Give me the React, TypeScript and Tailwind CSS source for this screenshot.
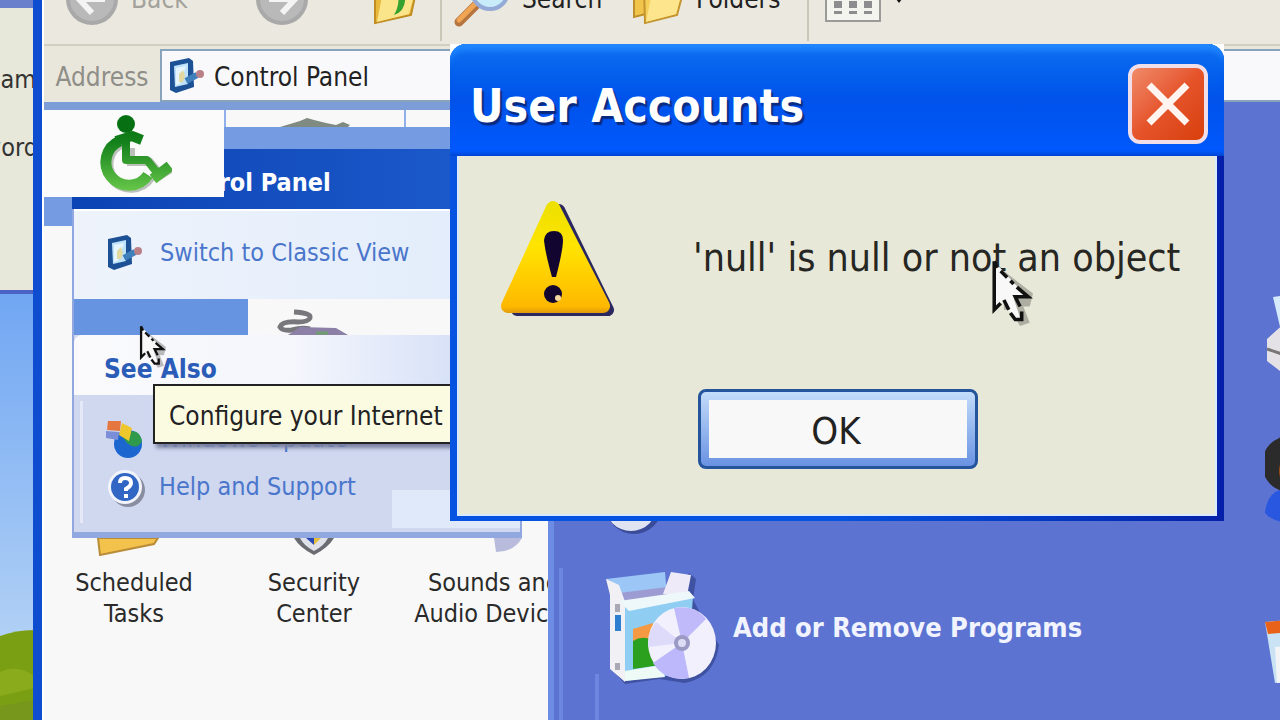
import { ReactNode } from 'react';

const PanelIcon = ({ className }: { className?: string }) => (
    <svg viewBox="0 0 40 40" className={className} aria-hidden="true">
        <path d="M4 6 L23 2 L27 5 L28 31 L10 37 L4 34 Z" fill="#1d5196" />
        <path d="M8 10 L22 7 L22 28 L9 31 Z" fill="#bfe2fb" />
        <path d="M10 12 L20 10 L14 28 L10 29 Z" fill="#e4f5ff" />
        <path d="M13 18 l4 -4 l2 6 l-2 6 l-4 0 Z" fill="#e2d9a0" />
        <path d="M20 25 L31 19" stroke="#3f7fbc" strokeWidth="6" />
        <circle cx="34" cy="18" r="4" fill="#b98088" />
    </svg>
);

const Cursor = ({ className }: { className?: string }) => (
    <svg viewBox="0 0 13 21" className={className} aria-hidden="true">
        <path d="M4 4 L13 11 L12 15 L10 15 L12 20 L9 21 L6 16 L4 16 Z" fill="#000" opacity="0.25" />
        <path d="M1 1 L1 16 L4 13 L7 19 L9 18.5 L7 12.5 L11 12 Z" fill="#f8f8f8" />
        <path
            d="M1 1 V16 L3 14 M1 1 L2 3 M3 4 L5 6 M6 7 L7 8 M8 9 L11.5 12 H7.5 L9 15 M4 13 L5.5 16 M6 17 L7.5 19 H9.5 V16.5"
            fill="none"
            stroke="#111"
            strokeWidth="1.1"
        />
    </svg>
);

const RoundArrow = ({ flip }: { flip?: boolean }) => (
    <svg viewBox="0 0 54 54" className={flip ? 'size-[54px] rotate-180' : 'size-[54px]'} aria-hidden="true">
        <circle cx="27" cy="27" r="26" fill="#a9a9a9" />
        <circle cx="27" cy="27" r="22" fill="#b9b9b9" />
        <path d="M27 13 L14 27 L27 41 M14 27 H40" fill="none" stroke="#f4f4f4" strokeWidth="6" />
    </svg>
);

const FolderUp = () => (
    <svg viewBox="0 0 46 52" className="h-[52px] w-[46px]" aria-hidden="true">
        <path d="M2 8 L30 4 L44 14 L38 42 L2 50 Z" fill="#e9b93c" stroke="#c08d22" strokeWidth="2" />
        <path d="M10 18 L44 12 L36 41 L4 49 Z" fill="#fbe58b" />
        <path d="M21 42 Q34 38 32 20 L39 22 L30 8 L18 18 L25 20 Q27 32 21 42 Z" fill="#35a22f" />
    </svg>
);

const SearchIcon = () => (
    <svg viewBox="0 0 56 56" className="size-14" aria-hidden="true">
        <path d="M5 51 L22 34" stroke="#b6743f" strokeWidth="9" strokeLinecap="round" />
        <path d="M5 49 L21 33" stroke="#f0a555" strokeWidth="5" strokeLinecap="round" />
        <circle cx="36" cy="20" r="18" fill="#c9ecfb" stroke="#93abd6" strokeWidth="4" />
    </svg>
);

const FoldersIcon = () => (
    <svg viewBox="0 0 56 52" className="h-[52px] w-14" aria-hidden="true">
        <path d="M2 6 L30 2 L40 10 L34 36 L2 44 Z" fill="#f1c44c" stroke="#bf8f2a" strokeWidth="2" />
        <path d="M12 14 L40 6 L53 12 L45 42 L13 50 Z" fill="#f6cf5a" stroke="#c4942e" strokeWidth="2" />
        <path d="M20 20 L52 12 L44 41 L14 49 Z" fill="#fde58d" />
    </svg>
);

const ViewsIcon = () => (
    <svg viewBox="0 0 56 46" className="h-[46px] w-14" aria-hidden="true">
        <rect x="1" y="1" width="54" height="44" fill="#f4f4ee" stroke="#9a9a98" strokeWidth="2" />
        {[9, 24, 39].map((x) => (
            <g key={x} fill="#8d8d90">
                <rect x={x} y="7" width="8" height="9" />
                <rect x={x} y="25" width="8" height="7" />
                <rect x={x} y="35" width="8" height="3" />
            </g>
        ))}
    </svg>
);

const Wheelchair = () => (
    <svg viewBox="0 0 76 80" className="h-20 w-[76px]" aria-hidden="true">
        <defs>
            <linearGradient id="wheel" gradientUnits="userSpaceOnUse" x1="0" y1="0" x2="0" y2="80">
                <stop offset="0" stopColor="#04700f" />
                <stop offset="0.35" stopColor="#13801b" />
                <stop offset="1" stopColor="#6ccb4c" />
            </linearGradient>
        </defs>
        <g transform="translate(2 2)" fill="none" stroke="#6f7a6f" opacity="0.45">
            <path d="M24 27 A23 23 0 1 0 52 61" strokeWidth="11" />
            <path d="M33 32 V46 H52 L63 59 L73 53" strokeWidth="8" />
        </g>
        <g fill="none" stroke="url(#wheel)">
            <path d="M24 27 A23 23 0 1 0 52 61" strokeWidth="11" />
            <path d="M30 20 V46 H51 L62 60" strokeWidth="8" strokeLinejoin="round" />
            <path d="M20 27 L36 22 L46 26" strokeWidth="10" strokeLinejoin="round" />
            <path d="M57 65 L74 52" strokeWidth="11" />
        </g>
        <circle cx="30" cy="10" r="9" fill="#067012" />
    </svg>
);

const WarningIcon = () => (
    <svg viewBox="0 0 120 124" className="h-[124px] w-[120px]" aria-hidden="true">
        <defs>
            <linearGradient id="warn" gradientUnits="userSpaceOnUse" x1="0" y1="0" x2="0" y2="116">
                <stop offset="0" stopColor="#ece000" />
                <stop offset="0.4" stopColor="#ffe400" />
                <stop offset="0.75" stopColor="#ffc600" />
                <stop offset="0.92" stopColor="#fdb800" />
                <stop offset="1" stopColor="#d48c10" />
            </linearGradient>
        </defs>
        <path d="M60 10 L109 110 L18 110 Z" fill="#2b2860" stroke="#2b2860" strokeWidth="12" strokeLinejoin="round" />
        <path d="M54 8 L104 106 L9 106 Z" fill="url(#warn)" stroke="url(#warn)" strokeWidth="14" strokeLinejoin="round" />
        <path d="M45 40 Q46 31 55 31 Q64 31 64 40 Q64 50 57 77 L53 77 Q46 52 45 40 Z" fill="#120630" />
        <circle cx="54" cy="94" r="9" fill="#120630" />
        <circle cx="59" cy="98" r="3" fill="#f4d9a0" />
    </svg>
);

const SoftwareBox = () => (
    <svg viewBox="0 0 116 118" className="h-[118px] w-[116px]" aria-hidden="true">
        <path d="M8 102 L20 115 L54 110 L80 114 Q110 108 114 76 L96 46 L88 30 L91 10 L84 4 L60 24 L20 100 Z" fill="#2c3a80" opacity="0.6" />
        <path d="M1 10 L60 3 L62 26 L14 32 Z" fill="#9cc6f6" />
        <path d="M14 24 L62 18 L64 30 L16 34 Z" fill="#9d9cd2" />
        <path d="M66 3 L86 6 L82 27 L58 25 Z" fill="#eeeaf8" />
        <path d="M1 10 L14 16 L22 38 L20 113 L5 100 L5 26 Z" fill="#f1f0f4" />
        <path d="M20 38 L88 28 L82 104 L20 112 Z" fill="#8fcdf3" />
        <path d="M14 32 L84 22 L90 29 L24 42 Z" fill="#eef7fa" />
        <path d="M28 60 L48 54 L48 76 L28 78 Z" fill="#f59a42" />
        <path d="M28 72 Q40 64 56 76 L56 96 L28 100 Z" fill="#2ba01f" />
        <path d="M20 102 L56 96 L60 108 L20 112 Z" fill="#eefaf5" />
        <rect x="10" y="46" width="6" height="16" fill="#2f7fd0" />
        <path d="M10 35 h5 v8 h-5 Z M10 94 h5 v7 h-5 Z" fill="#aaa8b4" />
        <ellipse cx="77" cy="74" rx="34" ry="36" fill="#f1f0fc" />
        <path d="M77 74 L69 39 Q90 35 101 50 Z" fill="#c0bafa" />
        <path d="M77 74 L84 109 Q60 113 48 94 Z" fill="#bcb8fb" />
        <path d="M77 74 L43 78 Q43 62 51 53 Z" fill="#dedafa" />
        <circle cx="77" cy="74" r="8" fill="#9a9ac4" />
        <circle cx="77" cy="74" r="4" fill="#dcdcf4" />
    </svg>
);

const GlobeIcon = () => (
    <svg viewBox="0 0 60 104" className="h-[104px] w-[60px]" aria-hidden="true">
        <ellipse cx="29" cy="77" rx="28" ry="27" fill="#2c3a80" opacity="0.7" />
        <ellipse cx="26" cy="75" rx="26" ry="26" fill="#dfe3f2" />
    </svg>
);

const PrinterIcon = () => (
    <svg viewBox="0 0 100 90" className="h-[90px] w-[100px]" aria-hidden="true">
        <path d="M8 6 L50 0 L60 36 L16 40 Z" fill="#d5eafc" />
        <path d="M2 48 L22 30 L80 40 L80 90 L20 84 L2 70 Z" fill="#e4e2e6" />
        <path d="M2 58 L20 64 L80 66" stroke="#777" strokeWidth="3" fill="none" />
    </svg>
);

const UserIcon = () => (
    <svg viewBox="0 0 100 90" className="h-[90px] w-[100px]" aria-hidden="true">
        <ellipse cx="24" cy="27" rx="27" ry="28" fill="#2c2b2b" />
        <ellipse cx="32" cy="34" rx="18" ry="20" fill="#9b4a10" />
        <path d="M0 76 Q2 54 20 52 L60 52 L60 86 Q10 90 0 76 Z" fill="#2a57e0" />
    </svg>
);

const RegionalIcon = () => (
    <svg viewBox="0 0 100 70" className="h-[70px] w-[100px]" aria-hidden="true">
        <path d="M0 5 L60 0 L64 60 L10 66 Z" fill="#c9e3f5" />
        <path d="M0 5 L60 0 L60 12 L3 17 Z" fill="#e9621a" />
        <path d="M10 30 L60 24 L60 62 L12 66 Z" fill="#f2f4f6" />
    </svg>
);

const UpdateIcon = () => (
    <svg viewBox="0 0 40 40" className="size-10" aria-hidden="true">
        <circle cx="23" cy="25" r="14" fill="#1c66cf" />
        <path d="M16 16 Q34 6 37 22 Q32 32 22 24 Z" fill="#2f9a4c" />
        <path d="M3 2 L16 2 L15 12 L2 11 Z" fill="#e57640" />
        <path d="M1 12 L14 13 L13 21 L1 19 Z" fill="#7b8fd8" />
        <path d="M17 4 L27 9 L24 22 L14 16 Z" fill="#eec72c" />
    </svg>
);

const HelpIcon = () => (
    <svg viewBox="0 0 40 40" className="size-10" aria-hidden="true">
        <circle cx="23" cy="23" r="17" fill="#8a8da0" />
        <circle cx="20" cy="20" r="17" fill="#f1f4fb" />
        <circle cx="20" cy="20" r="14" fill="#3266c4" />
        <path d="M15 16 Q15 11 20 11 Q26 11 26 16 Q26 19 21 22 V24" fill="none" stroke="#fff" strokeWidth="4" />
        <rect x="19" y="27" width="4" height="4" fill="#fff" />
    </svg>
);

const MouseIcon = () => (
    <svg viewBox="0 0 74 26" className="h-[26px] w-[74px]" aria-hidden="true">
        <path d="M18 3 Q36 4 34 9 Q32 13 22 13 Q6 12 4 18 Q6 22 16 21 Q26 18 34 20" fill="none" stroke="#77777c" strokeWidth="5" />
        <path d="M24 18 L60 19 L72 26 L12 26 Z" fill="#8c80a6" />
        <path d="M40 24 h12" stroke="#6f9d70" strokeWidth="3" />
    </svg>
);

const CaptionItem = ({ label, children }: { label: string; children: ReactNode }) => (
    <li className="flex flex-col items-center">
        <div className="flex h-[29px] w-full justify-center">{children}</div>
        <span className="w-[168px] text-center text-[25px] leading-[31px] text-[#2a2a2a]">{label}</span>
    </li>
);

const Toolbar = () => (
    <div className="flex h-[92px] shrink-0 items-center overflow-hidden border-b-2 border-[#d3cfc0] bg-[#ebe9df] pl-[21px] text-[26px]">
        <button className="flex w-[190px] items-center gap-3 text-[#a3a29c]">
            <RoundArrow />
            Back
        </button>
        <button className="w-[118px]" aria-label="Forward">
            <RoundArrow flip />
        </button>
        <button className="w-[67px]" aria-label="Up">
            <FolderUp />
        </button>
        <div className="h-[84px] w-[2px] bg-[#c9c6b8]" />
        <button className="ml-3 flex w-[178px] items-center gap-3 text-[#222]">
            <SearchIcon />
            Search
        </button>
        <button className="flex w-[175px] items-center gap-2 text-[#222]">
            <FoldersIcon />
            Folders
        </button>
        <div className="h-[84px] w-[2px] bg-[#c9c6b8]" />
        <button className="ml-4 flex items-center gap-3" aria-label="Views">
            <ViewsIcon />
            <svg viewBox="0 0 12 12" className="size-3" aria-hidden="true">
                <path d="M0 2 H12 L6 10 Z" fill="#111" />
            </svg>
        </button>
    </div>
);

const AddressBar = () => (
    <div className="flex h-14 shrink-0 items-stretch bg-[#e9e7dc] pt-[3px]">
        <label htmlFor="address" className="flex w-[116px] items-center justify-center pt-1 text-[26px] text-[#8f8e88]">
            Address
        </label>
        <div className="flex min-w-0 flex-1 items-center gap-2 border-2 border-r-0 border-[#88a4bd] bg-[#f9f9fb] pl-1">
            <PanelIcon className="size-10 shrink-0" />
            <input
                id="address"
                defaultValue="Control Panel"
                className="min-w-0 flex-1 bg-transparent pt-1 text-[26px] text-[#222] outline-none"
            />
        </div>
    </div>
);

const SidePanel = () => (
    <aside className="relative h-[389px] w-[450px] border-x-2 border-b-[6px] border-[#90a8df] bg-[#d0d8f0]">
        <h2 className="-ml-[2px] flex h-[60px] items-center bg-linear-to-r from-[#0c43b4] to-[#1e5ccd] pt-2 pl-[88px] text-[25px] font-bold text-white">
            Control Panel
        </h2>
        <div className="flex h-[90px] items-center border-t-2 border-white bg-linear-to-r from-[#eef3fb] to-[#e1ecfb] pb-1 pl-[30px]">
            <a href="#classic" className="flex items-center gap-4 text-[25px] text-[#4a76cb]">
                <PanelIcon className="size-10" />
                Switch to Classic View
            </a>
        </div>
        <div className="flex h-9 bg-[#f8f8f9]">
            <div className="w-[174px] bg-[#6794e0]" />
            <div className="flex items-end pl-7">
                <MouseIcon />
            </div>
        </div>
        <h2 className="flex h-[60px] items-center rounded-t-lg bg-linear-to-r from-[#fafafc] via-[#f4f6fc] to-[#cbd8f5] pt-2 pl-[30px] text-[26px] font-bold text-[#2a5cb8]">
            See Also
        </h2>
        <div className="absolute right-0 bottom-1 h-[38px] w-[128px] bg-[#e0e9f9]" />
        <ul className="relative m-[6px] border-l-[3px] border-[#e5e9f7] pl-[22px] text-[25px] text-[#4a76cb]">
            <li className="pt-[18px]">
                <a href="#update" className="flex items-center gap-[14px]">
                    <UpdateIcon />
                    Windows Update
                </a>
            </li>
            <li className="pt-2 pb-4">
                <a href="#help" className="flex items-center gap-[14px]">
                    <HelpIcon />
                    Help and Support
                </a>
            </li>
        </ul>
    </aside>
);

const ControlPanelWindow = () => (
    <section className="absolute -top-[46px] right-0 bottom-0 left-[33px] flex flex-col overflow-hidden border-l-[9px] border-[#0f4dd0] bg-white pl-[2px]">
        <Toolbar />
        <AddressBar />
        <div className="flex min-h-0 flex-1">
            <div className="relative w-[504px] shrink-0 overflow-hidden bg-[#f8f8f8]">
                <div className="h-2 bg-[#7c9dd8]" />
                <div className="flex h-[17px] divide-x-2 divide-[#8fb0ea]">
                    <div className="w-[182px]" />
                    <div className="flex w-[180px] items-end justify-center">
                        <svg viewBox="0 0 70 10" className="h-[10px] w-[70px]" aria-hidden="true">
                            <path d="M0 10 L10 7 L20 4 L27 1 L34 3 L46 6 L56 8 L63 5 L70 8 L68 10 Z" fill="#7f8a80" />
                        </svg>
                    </div>
                    <div />
                </div>
                <div className="h-[22px] bg-[#759be2]" />
                <div className="flex">
                    <div className="h-[77px] w-7 bg-[#759be2]" />
                    <SidePanel />
                </div>
                <ul className="grid w-[540px] grid-cols-3">
                    <CaptionItem label="Scheduled Tasks">
                        <svg viewBox="0 0 64 18" className="mr-3 h-[18px] w-16" aria-hidden="true">
                            <path d="M2 0 H62 L58 6 L4 17 Z" fill="#f2c24d" stroke="#b98c37" strokeWidth="2" />
                        </svg>
                    </CaptionItem>
                    <CaptionItem label="Security Center">
                        <svg viewBox="0 0 40 18" className="h-[18px] w-10" aria-hidden="true">
                            <path d="M0 0 H40 Q34 10 20 17 Q6 10 0 0 Z" fill="#6a6c72" />
                            <path d="M6 0 H34 Q30 8 20 13 Q10 8 6 0 Z" fill="#dfe1e8" />
                            <path d="M12 0 H20 V7 Z" fill="#2747b8" />
                            <path d="M20 0 H27 L20 7 Z" fill="#e5bd3a" />
                        </svg>
                    </CaptionItem>
                    <CaptionItem label="Sounds and Audio Devices">
                        <svg viewBox="0 0 40 18" className="ml-8 h-[18px] w-10" aria-hidden="true">
                            <path d="M4 0 H32 Q24 14 6 14 Z" fill="#b9bbdc" />
                        </svg>
                    </CaptionItem>
                </ul>
                <div className="absolute top-2 left-0 flex h-[87px] w-[180px] items-center justify-center bg-[#fbfbfb]">
                    <Wheelchair />
                </div>
            </div>
            <div className="relative min-w-0 flex-1 overflow-hidden border-l-[6px] border-[#6d8ce3] bg-[#5c73d2] pt-[161px] pl-[51px]">
                <div className="absolute top-[466px] bottom-0 left-[5px] w-1 bg-[#6d86e0]" />
                <div className="absolute top-[572px] bottom-0 left-[41px] w-1 bg-[#6d86e0]" />
                <ul className="grid w-[1320px] auto-rows-[146px] grid-cols-2 items-center text-[27px] font-bold text-[#f1f4ff]">
                    <li />
                    <li>
                        <PrinterIcon />
                    </li>
                    <li>
                        <GlobeIcon />
                    </li>
                    <li>
                        <UserIcon />
                    </li>
                    <li>
                        <a href="#programs" className="flex items-center gap-3">
                            <SoftwareBox />
                            Add or Remove Programs
                        </a>
                    </li>
                    <li className="pt-12">
                        <RegionalIcon />
                    </li>
                </ul>
            </div>
        </div>
    </section>
);

const ErrorDialog = () => (
    <div className="absolute top-11 left-[450px] w-[774px] bg-white">
        <div
            role="dialog"
            aria-labelledby="dialog-title"
            className="rounded-t-2xl bg-linear-to-r from-[#0553e0] via-[#0553e0] to-[#0520a8] px-[7px] pb-[5px]"
        >
            <header className="-mx-[7px] flex h-28 items-center justify-between rounded-t-2xl bg-linear-to-b from-[#0f6ff0] via-[#0052ea] to-[#0059ff] pt-2 pr-4 pl-5 shadow-[inset_0_10px_6px_-4px_#2288ff,inset_0_-4px_4px_-2px_#0040c8]">
                <h1 id="dialog-title" className="pt-1 text-[46px] font-bold text-white [text-shadow:2px_3px_1px_#0a2a80]">
                    User Accounts
                </h1>
                <button
                    aria-label="Close"
                    className="flex size-20 items-center justify-center rounded-xl border-4 border-[#f0dfe8] bg-linear-to-br from-[#f08a68] via-[#e5532a] to-[#d84008]"
                >
                    <svg viewBox="0 0 44 44" className="size-11" aria-hidden="true">
                        <path d="M3 3 L41 41 M41 3 L3 41" stroke="#fff4f0" strokeWidth="7" />
                    </svg>
                </button>
            </header>
            <div className="border-2 border-t-0 border-[#d8e8ff] bg-[#e8e8d9] pb-[45px]">
                <div className="flex items-center pt-11 pl-10">
                    <WarningIcon />
                    <p className="pb-2 pl-[74px] text-[39px] whitespace-nowrap text-[#262622]">
                        'null' is null or not an object
                    </p>
                </div>
                <div className="flex justify-center pt-[65px] pl-[2px]">
                    <button className="h-20 w-[280px] rounded-lg border-[3px] border-[#24549c] bg-linear-to-b from-[#c3dcfa] to-[#6a92e2] p-2 text-[38px]">
                        <span className="flex h-full items-center justify-center bg-[#f8f8f8] pt-1 pr-1 text-[#222]">OK</span>
                    </button>
                </div>
            </div>
        </div>
    </div>
);

const App = () => {
    return (
        <main className="relative h-screen overflow-hidden bg-linear-to-b from-[#6fa5f2] from-40% to-[#b0d0f5] to-88% font-['DejaVu_Sans_Condensed','DejaVu_Sans',sans-serif]">
            <svg viewBox="0 0 34 90" preserveAspectRatio="none" className="absolute bottom-0 left-0 h-[90px] w-[34px]" aria-hidden="true">
                <path d="M0 6 Q16 0 34 0 V90 H0 Z" fill="#7b9f12" />
                <path d="M0 42 Q18 34 34 46 V58 L0 66 Z" fill="#8aac1c" />
                <path d="M0 76 L34 70 V90 H0 Z" fill="#76961c" />
            </svg>
            <section className="absolute top-0 left-0 flex h-[294px] w-[34px] flex-col items-end gap-[38px] overflow-hidden border-t-8 border-b-4 border-t-[#6a80cc] border-b-[#4a62c4] bg-[#e8e8da] pt-[57px] text-[25px] leading-[30px] text-[#333]">
                <span className="-mr-4 whitespace-nowrap">User name</span>
                <span className="-mr-1">Password</span>
            </section>
            <ControlPanelWindow />
            <div
                role="tooltip"
                className="absolute top-96 left-[153px] flex h-[60px] w-[320px] items-center border-2 border-[#222] bg-[#fbfbe2] pt-1 pl-[14px] text-[26px] whitespace-nowrap text-[#222] shadow-[3px_4px_4px_#7a80a0]"
            >
                Configure your Internet
            </div>
            <Cursor className="absolute top-[324px] left-[139px] h-[44px] w-[27px]" />
            <ErrorDialog />
            <Cursor className="absolute top-[258px] left-[991px] h-[68px] w-[42px]" />
        </main>
    );
};

export default App;
